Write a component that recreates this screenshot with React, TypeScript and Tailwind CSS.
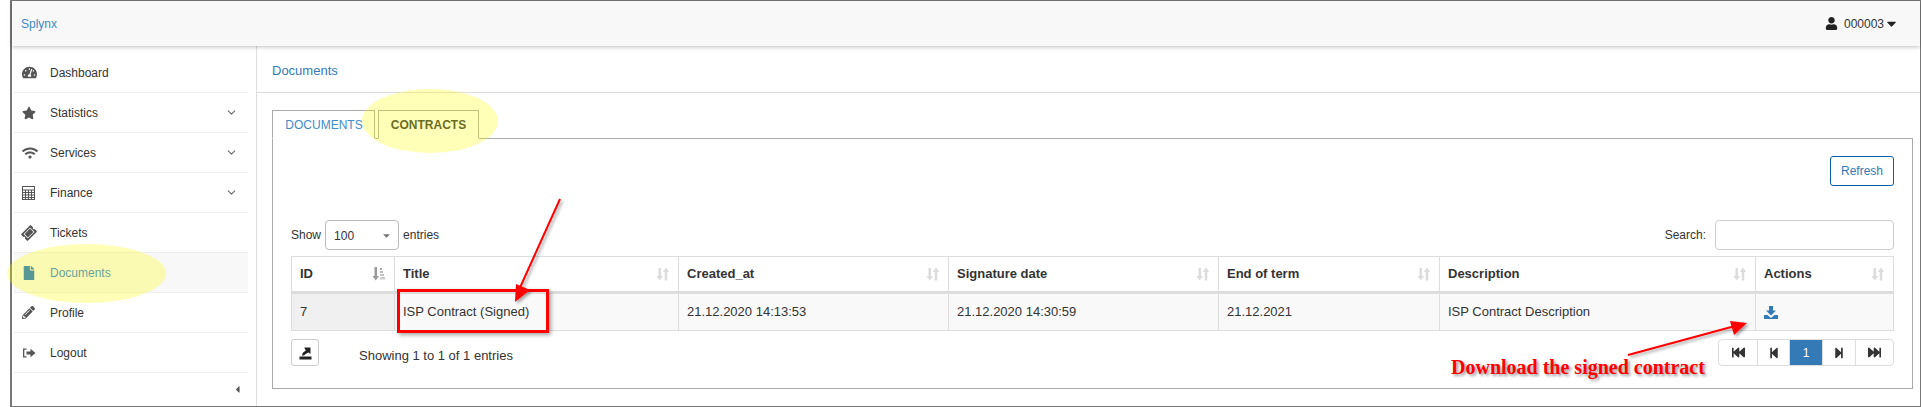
import React from "react";
import { FaTachometerAlt, FaStar, FaWifi, FaTicketAlt, FaFile, FaPencilAlt, FaUser, FaCaretDown, FaCaretLeft, FaFastBackward, FaStepBackward, FaStepForward, FaFastForward } from "react-icons/fa";
import { LuChevronDown } from "react-icons/lu";

const SortIcon = ({ active }: { active?: boolean }) => (
  <svg width="14" height="14" viewBox="0 0 14 14" className="shrink-0">
    {active ? (
      <g fill="#9a9a9a">
        <path d="M2.500 0h2.500v9h2l-3.250 4.500L.500 9h2z" />
        <rect x="8" y="1" width="2" height="2" fill="#aaa" />
        <rect x="8" y="4" width="3" height="2" fill="#bbb" />
        <rect x="8" y="7" width="4" height="2" fill="#c4c4c4" />
        <rect x="8" y="10" width="5" height="2.500" fill="#ccc" />
      </g>
    ) : (
      <g fill="#dcdcdc">
        <path d="M2.500 1h2.500v8h2l-3.250 4.500L.500 9h2z" />
        <path d="M10 .5l3.250 4.500h-2v8.500H8.750V5h-2z" />
      </g>
    )}
  </svg>
);

const LogoutIcon = () => (
  <svg width="14" height="14" viewBox="0 0 14 14" fill="#555">
    <path d="M1 2.500h3.500v1.300H2.300v6.400h2.200v1.300H1z" />
    <path d="M4.500 5.500h4V2.800l5 4.200-5 4.200V8.500h-4z" />
  </svg>
);

const ExportIcon = () => (
  <svg width="13" height="14" viewBox="0 0 13 14" fill="#222">
    <rect x="0.500" y="10.500" width="12" height="3" />
    <path d="M3 9.500c.2-2.500 1.800-4.200 3.800-4.800L5.300 1.500h6.200v6.500L9.800 6.500C7.800 7 6 8 5.200 9.500z" />
  </svg>
);

const DownloadIcon = () => (
  <svg width="14" height="13" viewBox="0 0 14 13" fill="#337ab7">
    <path d="M5 0h4v4.500h3L7 9.500 2 4.500h3z" />
    <path d="M0 9h3.500L7 12l3.500-3H14v4H0z" />
  </svg>
);

const CalcIcon = () => (
  <svg width="13" height="14" viewBox="0 0 13 14" fill="none" stroke="#555">
    <rect x="0.500" y="0.500" width="12" height="13" />
    <path d="M0.500 4H12.500M0.500 6.500H12.500M0.500 9H12.500M0.500 11.500H12.500M3.500 4V13.500M6.500 4V13.500M9.500 4V13.500" strokeWidth="1" />
  </svg>
);

const nav: { label: string; icon: React.ReactNode; chevron?: boolean; active?: boolean }[] = [
  { label: "Dashboard", icon: <FaTachometerAlt size={15} /> },
  { label: "Statistics", icon: <FaStar size={14} />, chevron: true },
  { label: "Services", icon: <FaWifi size={16} />, chevron: true },
  { label: "Finance", icon: <CalcIcon />, chevron: true },
  { label: "Tickets", icon: <FaTicketAlt size={14} className="-rotate-45" /> },
  { label: "Documents", icon: <FaFile size={14} />, active: true },
  { label: "Profile", icon: <FaPencilAlt size={13} /> },
  { label: "Logout", icon: <LogoutIcon /> },
];

const cols = [
  { label: "ID", w: "w-[103px]", value: "7", active: true },
  { label: "Title", w: "w-[284px]", value: "ISP Contract (Signed)" },
  { label: "Created_at", w: "w-[270px]", value: "21.12.2020 14:13:53" },
  { label: "Signature date", w: "w-[270px]", value: "21.12.2020 14:30:59" },
  { label: "End of term", w: "w-[221px]", value: "21.12.2021" },
  { label: "Description", w: "w-[316px]", value: "ISP Contract Description" },
  { label: "Actions", w: "w-[138px]", value: "" },
];

const pages = [
  { w: "w-[38px]", node: <FaFastBackward size={13} /> },
  { w: "w-[32px]", node: <FaStepBackward size={12} /> },
  { w: "w-[33px]", node: <span>1</span>, active: true },
  { w: "w-[33px]", node: <FaStepForward size={12} /> },
  { w: "w-[38px]", node: <FaFastForward size={13} /> },
];

export default function App() {
  return (
    <div className="relative w-[1921px] h-[407px] overflow-hidden bg-white pl-[10px] text-[12px] text-[#333] font-['Liberation_Sans',Arial,sans-serif]">
      <div className="h-full flex flex-col border-l-2 border-r border-t border-b border-[#777]">
        <header className="relative z-10 h-[45px] shrink-0 bg-[#f8f8f8] shadow-[0_1px_4px_rgba(0,0,0,0.25)] flex items-center justify-between pl-[9px] pr-[21px]">
          <a className="text-[#428bca] text-[12px]">Splynx</a>
          <div className="flex items-center text-[#333] text-[12px]">
            <FaUser size={13} className="text-[#222] mr-[6px]" />
            <span>000003</span>
            <FaCaretDown size={15} className="text-[#222]" />
          </div>
        </header>

        <div className="flex flex-1 min-h-0">
          <aside className="w-[245px] shrink-0 border-r border-[#ddd] pt-[7px] flex flex-col">
            {nav.map((n) => (
              <div
                key={n.label}
                className={`h-[40px] ml-[2px] mr-[8px] border-b border-[#eee] flex items-center pr-[10px] ${n.active ? "bg-[#f8f8f8] text-[#2a80d8]" : "text-[#333]"}`}
              >
                <span className={`w-[36px] pl-[8px] shrink-0 flex items-center ${n.active ? "text-[#1a70d0]" : "text-[#555]"}`}>{n.icon}</span>
                <span className="flex-1">{n.label}</span>
                {n.chevron && <LuChevronDown size={13} className="text-[#666]" />}
              </div>
            ))}
            <div className="flex justify-end pr-[13px] pt-[11px] text-[#555]">
              <FaCaretLeft size={11} />
            </div>
          </aside>

          <main className="flex-1 min-w-0 flex flex-col">
            <div className="h-[47px] shrink-0 border-b border-[#ddd] flex items-center pl-[15px] pt-[4px]">
              <a className="text-[#337ab7] text-[13px]">Documents</a>
            </div>
            <div className="pl-[15px] pr-[7px] pt-[17px]">
              <div className="flex h-[29px] gap-[3px] relative -mb-px">
                <div className="w-[103px] border border-[#aaa] border-b-white bg-white flex items-center justify-center pl-[1px] text-[#428bca] text-[12px]">DOCUMENTS</div>
                <div className="w-[101px] border border-[#aaa] border-b-white bg-white flex items-center justify-center font-bold text-[#333] text-[12px]">CONTRACTS</div>
              </div>
              <div className="h-[251px] border border-[#aaa] pt-[17px] px-[18px]">
                <div className="flex justify-end">
                  <button className="w-[64px] h-[30px] border border-[#0a5ea5] rounded-[3px] text-[#337ab7] text-[12px] bg-white">Refresh</button>
                </div>
                <div className="flex items-center justify-between mt-[34px] h-[30px]">
                  <div className="flex items-center gap-[4px]">
                    <span>Show</span>
                    <div className="w-[74px] h-[30px] border border-[#bbb] rounded-[4px] flex items-center justify-between pl-[8px] pr-[6px] text-[12px]">
                      <span className="mt-[2px]">100</span>
                      <FaCaretDown size={11} className="text-[#777]" />
                    </div>
                    <span>entries</span>
                  </div>
                  <div className="flex items-center gap-[9px]">
                    <span>Search:</span>
                    <div className="w-[179px] h-[30px] border border-[#ccc] rounded-[4px]" />
                  </div>
                </div>
                <table className="mt-[6px] w-[1602px] table-fixed border-collapse">
                  <thead>
                    <tr className="h-[36px]">
                      {cols.map((c) => (
                        <th key={c.label} className={`${c.w} border border-[#ddd] border-b-[3px] px-[8px] text-left font-bold text-[13px]`}>
                          <div className="flex items-center justify-between">
                            <span>{c.label}</span>
                            <SortIcon active={c.active} />
                          </div>
                        </th>
                      ))}
                    </tr>
                  </thead>
                  <tbody>
                    <tr className="h-[38px] bg-[#f9f9f9]">
                      {cols.map((c) => (
                        <td key={c.label} className={`border border-[#ddd] px-[8px] text-[13px] ${c.active ? "bg-[#f0f0f0]" : ""}`}>
                          {c.label === "Actions" ? <span className="flex"><DownloadIcon /></span> : c.value}
                        </td>
                      ))}
                    </tr>
                  </tbody>
                </table>
                <div className="flex items-center mt-[8px]">
                  <div className="w-[28px] h-[27px] border border-[#ccc] rounded-[3px] flex items-center justify-center">
                    <ExportIcon />
                  </div>
                  <span className="ml-[40px] text-[13px] pt-[7px]">Showing 1 to 1 of 1 entries</span>
                  <div className="ml-auto flex h-[27px] border border-[#ddd] rounded-[4px] overflow-hidden">
                    {pages.map((p, i) => (
                      <div
                        key={i}
                        className={`${p.w} flex items-center justify-center ${i > 0 ? "border-l border-[#ddd]" : ""} ${p.active ? "bg-[#337ab7] text-white" : "text-[#333]"}`}
                      >
                        {p.node}
                      </div>
                    ))}
                  </div>
                </div>
              </div>
            </div>
          </main>
        </div>
      </div>

      {/* annotations */}
      <div className="absolute left-[7px] top-[244px] w-[159px] h-[59px] rounded-[50%] bg-[rgba(255,255,0,0.28)]" />
      <div className="absolute left-[362px] top-[89px] w-[136px] h-[64px] rounded-[50%] bg-[rgba(255,255,0,0.28)]" />
      <div className="absolute left-[397px] top-[289px] w-[152px] h-[44px] border-[3px] border-[#f00] shadow-[2px_2px_4px_rgba(0,0,0,0.35)]" />
      <svg className="absolute left-0 top-0 pointer-events-none" width="1921" height="407" viewBox="0 0 1921 407">
        <defs>
          <filter id="s" x="-30%" y="-30%" width="160%" height="160%">
            <feDropShadow dx="2" dy="2" stdDeviation="1.500" floodColor="#000" floodOpacity="0.35" />
          </filter>
        </defs>
        <g filter="url(#s)" fill="#f00">
          <path d="M560 199 L 518 292" stroke="#f00" strokeWidth="2" fill="none" />
          <path d="M515 302 L 516 284 L 530 290 Z" />
          <path d="M1628 355 L 1735 326" stroke="#f00" strokeWidth="2" fill="none" />
          <path d="M1747 323 L 1730 321 L 1734 335 Z" />
        </g>
      </svg>
      <div className="absolute left-[1451px] top-[355px] font-['Liberation_Serif',serif] font-bold text-[20px] leading-[24px] text-[#f00] [text-shadow:2px_2px_3px_rgba(0,0,0,0.4)] whitespace-nowrap">
        Download the signed contract
      </div>
    </div>
  );
}
